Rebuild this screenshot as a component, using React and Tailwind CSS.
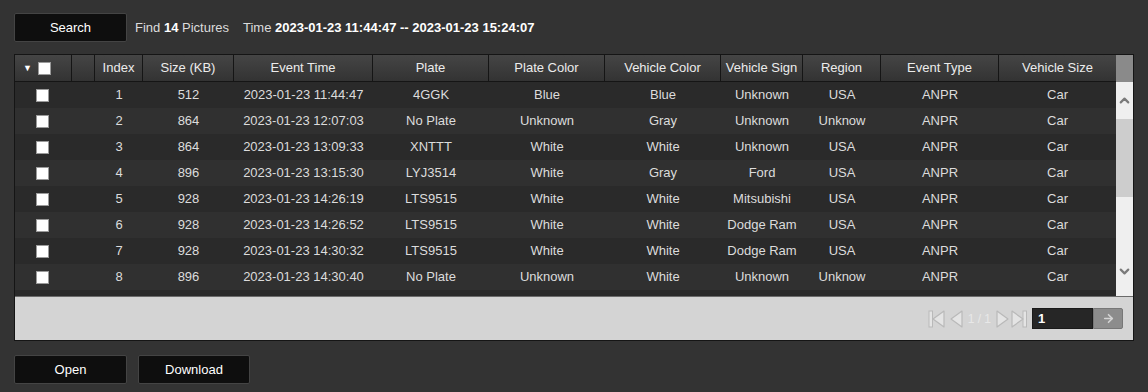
import { ChevronUp, ChevronDown, ArrowRight } from 'lucide-react'

const COLS = 'grid grid-cols-[57px_23px_48px_91px_139px_116px_116px_116px_82px_78px_118px_117px]'

const HEADERS = ['Index', 'Size (KB)', 'Event Time', 'Plate', 'Plate Color', 'Vehicle Color', 'Vehicle Sign', 'Region', 'Event Type', 'Vehicle Size']

const ROWS = [
  [1, 512, '2023-01-23 11:44:47', '4GGK', 'Blue', 'Blue', 'Unknown', 'USA'],
  [2, 864, '2023-01-23 12:07:03', 'No Plate', 'Unknown', 'Gray', 'Unknown', 'Unknow'],
  [3, 864, '2023-01-23 13:09:33', 'XNTTT', 'White', 'White', 'Unknown', 'USA'],
  [4, 896, '2023-01-23 13:15:30', 'LYJ3514', 'White', 'Gray', 'Ford', 'USA'],
  [5, 928, '2023-01-23 14:26:19', 'LTS9515', 'White', 'White', 'Mitsubishi', 'USA'],
  [6, 928, '2023-01-23 14:26:52', 'LTS9515', 'White', 'White', 'Dodge Ram', 'USA'],
  [7, 928, '2023-01-23 14:30:32', 'LTS9515', 'White', 'White', 'Dodge Ram', 'USA'],
  [8, 896, '2023-01-23 14:30:40', 'No Plate', 'Unknown', 'White', 'Unknown', 'Unknow'],
]

function Box() {
  return <span className="block w-[13px] h-[13px] bg-white border border-[#9a9a9a]" />
}

function DarkButton({ children, className = '' }) {
  return (
    <button className={`h-[29px] bg-[#0e0e0e] border border-[#444] rounded-[2px] text-[13px] text-white ${className}`}>
      {children}
    </button>
  )
}

// pager glyphs: outlined, greyed-out because there's only one page
function PagerIcon({ dir, end }) {
  const left = dir === 'left'
  return (
    <svg width={end ? 18 : 15} height="20" viewBox={end ? '0 0 18 20' : '0 0 15 20'}>
      {end && (
        <rect x={left ? 1 : 13} y="2" width="3.5" height="16" fill="#e4e4e4" stroke="#b9b9b9" />
      )}
      <polygon
        points={left ? (end ? '16,2 5,10 16,18' : '13,2 2,10 13,18') : '2,2 13,10 2,18'}
        fill="#e4e4e4"
        stroke="#b9b9b9"
        strokeWidth="1.2"
        strokeLinejoin="round"
      />
    </svg>
  )
}

export default function App() {
  return (
    <div className="w-[1148px] h-[392px] bg-[#333333] px-[14px] pt-[13px] font-['Liberation_Sans',Arial,sans-serif] text-[13px] text-[#dcdcdc] overflow-hidden">
      <div className="flex items-center h-[29px]">
        <DarkButton className="w-[113px]">Search</DarkButton>
        <span className="ml-[8px]">
          Find <b className="text-white">14</b> Pictures
        </span>
        <span className="ml-[14px]">
          Time <b className="text-white">2023-01-23 11:44:47 -- 2023-01-23 15:24:07</b>
        </span>
      </div>

      <div className="mt-[12px] w-[1120px] border border-[#151515]">
        <div className="flex">
          <div className="w-[1101px]">
            <div className={`${COLS} h-[27px] bg-gradient-to-b from-[#454545] to-[#333] border-b border-[#151515] text-[#ececec]`}>
              <div className="flex items-center gap-[6px] pl-[8px] border-r border-[#151515]">
                <span className="text-[9px] text-white leading-none">▼</span>
                <Box />
              </div>
              <div className="border-r border-[#151515]" />
              {HEADERS.map((h, i) => (
                <div
                  key={h}
                  className={`flex items-center justify-center whitespace-nowrap ${i < HEADERS.length - 1 ? 'border-r border-[#151515]' : ''}`}
                >
                  {h}
                </div>
              ))}
            </div>

            <div className="h-[214px] bg-[#2a2a2a]">
              {ROWS.map((r, i) => (
                <div key={r[0]} className={`${COLS} h-[26px] items-center ${i % 2 ? 'bg-[#303030]' : 'bg-[#2a2a2a]'}`}>
                  <div className="flex justify-center pr-[2px]">
                    <Box />
                  </div>
                  <div />
                  {[...r, 'ANPR', 'Car'].map((v, j) => (
                    <div key={j} className="text-center whitespace-nowrap">
                      {v}
                    </div>
                  ))}
                </div>
              ))}
            </div>
          </div>

          <div className="w-[17px] flex flex-col">
            <div className="h-[27px] bg-[#8a8a8a]" />
            <div className="h-[37px] bg-[#efefef] flex items-center justify-center">
              <ChevronUp size={15} strokeWidth={3.5} color="#7a7a7a" />
            </div>
            <div className="h-[78px] bg-[#cdcdcd]" />
            <div className="h-[49px] bg-[#efefef]" />
            <div className="h-[50px] bg-[#efefef] flex items-center justify-center">
              <ChevronDown size={15} strokeWidth={3.5} color="#7a7a7a" />
            </div>
          </div>
        </div>

        <div className="h-[44px] bg-[#d4d4d4] border-t border-[#6a6a6a] flex items-center justify-end pr-[10px]">
          <div className="flex items-center">
            <PagerIcon dir="left" end />
            <span className="ml-[3px]">
              <PagerIcon dir="left" />
            </span>
            <span className="mx-[4px] text-[12px] text-[#e8e8e8]">1 / 1</span>
            <PagerIcon dir="right" />
            <PagerIcon dir="right" end />
          </div>
          <div className="ml-[4px] flex h-[21px]">
            <div className="w-[61px] bg-[#262626] border border-[#1a1a1a] text-white text-[13px] font-bold pl-[5px] leading-[19px]">1</div>
            <div className="w-[30px] bg-[#8c8c8c] border border-[#777] rounded-r-[2px] flex items-center justify-center">
              <ArrowRight size={13} strokeWidth={3} color="#d4d4d4" />
            </div>
          </div>
        </div>
      </div>

      <div className="mt-[14px] flex gap-[11px]">
        <DarkButton className="w-[113px] h-[28px]">Open</DarkButton>
        <DarkButton className="w-[112px] h-[28px]">Download</DarkButton>
      </div>
    </div>
  )
}
